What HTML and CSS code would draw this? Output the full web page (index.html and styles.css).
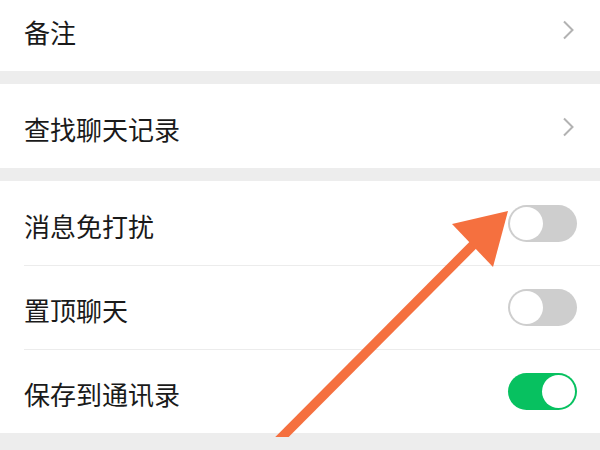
FILE: index.html
```html
<!DOCTYPE html>
<html lang="zh-CN">
<head>
<meta charset="utf-8">
<link rel="stylesheet" href="styles.css">
</head>
<body>
<div class="page">
  <div class="group group-first">
    <div class="row">
      <span class="label">备注</span>
      <svg class="chevron" viewBox="0 0 12 20" width="12" height="20"><path d="M2 1.5 L10.5 10 L2 18.5" fill="none" stroke="#b2b2b2" stroke-width="2"/></svg>
    </div>
  </div>
  <div class="group">
    <div class="row">
      <span class="label">查找聊天记录</span>
      <svg class="chevron" viewBox="0 0 12 20" width="12" height="20"><path d="M2 1.5 L10.5 10 L2 18.5" fill="none" stroke="#b2b2b2" stroke-width="2"/></svg>
    </div>
  </div>
  <div class="group">
    <div class="row">
      <span class="label">消息免打扰</span>
      <span class="switch"><span class="knob"></span></span>
    </div>
    <div class="row row-divided">
      <span class="label">置顶聊天</span>
      <span class="switch"><span class="knob"></span></span>
    </div>
    <div class="row row-divided">
      <span class="label">保存到通讯录</span>
      <span class="switch switch-on"><span class="knob"></span></span>
    </div>
  </div>
  <svg class="arrow" viewBox="0 0 600 450" width="600" height="450">
    <line x1="274" y1="458" x2="482" y2="249" stroke="#f5703f" stroke-width="9.5"/>
    <polygon points="508,224 452,237 493,280" fill="#f5703f"/>
  </svg>
</div>
</body>
</html>
```
FILE: styles.css
```css
html, body {
  margin: 0;
  padding: 0;
}
body {
  background: #ededed;
  width: 600px;
  height: 450px;
  overflow: hidden;
}
.page {
  position: relative;
  width: 600px;
  height: 450px;
  font-family: "Noto Sans CJK SC", "Noto Sans", sans-serif;
}
.group {
  background: #ffffff;
  margin-bottom: 13px;
}
.group-first {
  margin-top: -13px;
}
.row {
  height: 84px;
  display: flex;
  align-items: center;
  justify-content: space-between;
  padding: 0 23px 0 24px;
  box-sizing: border-box;
  position: relative;
}
.row-divided::before {
  content: "";
  position: absolute;
  left: 24px;
  right: 0;
  top: 0;
  height: 1px;
  background: #ececec;
}
.label {
  font-size: 26px;
  color: #1a1a1a;
  padding-top: 4px;
}
.chevron {
  margin-right: 3px;
  margin-top: 2px;
}
.switch {
  width: 69px;
  height: 37px;
  border-radius: 19px;
  background: #cecece;
  display: flex;
  align-items: center;
  padding: 2px;
  box-sizing: border-box;
}
.switch-on {
  background: #07c160;
  justify-content: flex-end;
}
.knob {
  width: 33px;
  height: 33px;
  border-radius: 50%;
  background: #ffffff;
}
.arrow {
  position: absolute;
  left: 0;
  top: 0;
  pointer-events: none;
}
```
